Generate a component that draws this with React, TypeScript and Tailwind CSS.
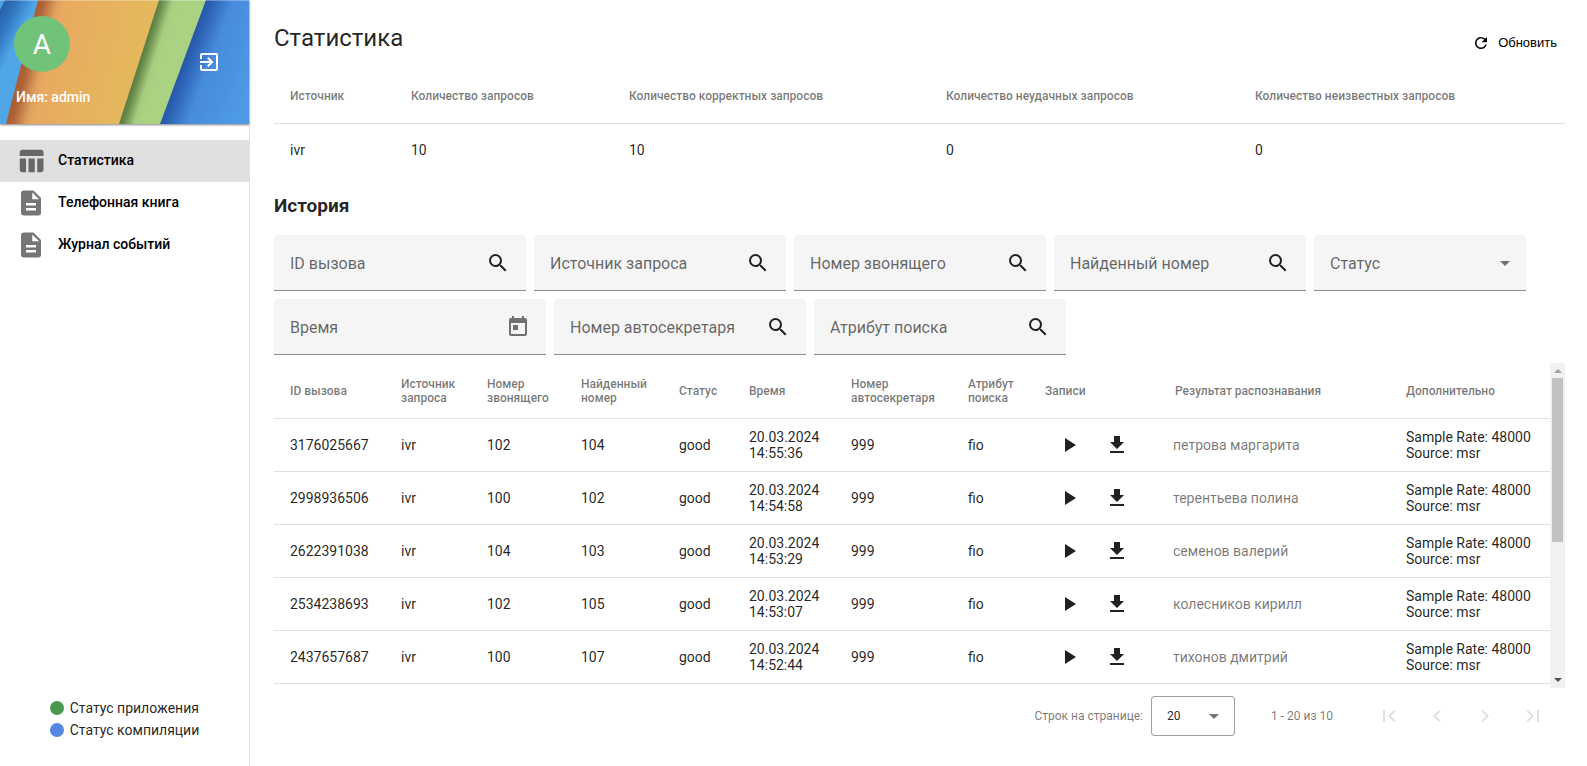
import React, { useState } from 'react';
import {
  MdArrowDropDown,
  MdChevronLeft,
  MdChevronRight,
  MdDescription,
  MdExitToApp,
  MdFileDownload,
  MdFirstPage,
  MdLastPage,
  MdPlayArrow,
  MdRefresh,
  MdSearch,
  MdTableChart,
  MdToday,
} from 'react-icons/md';

const menu = [
  { title: 'Статистика', icon: MdTableChart, active: true },
  { title: 'Телефонная книга', icon: MdDescription, active: false },
  { title: 'Журнал событий', icon: MdDescription, active: false },
];

const records = [
  { id: '3176025667', caller: '102', found: '104', time: '14:55:36', result: 'петрова маргарита' },
  { id: '2998936506', caller: '100', found: '102', time: '14:54:58', result: 'терентьева полина' },
  { id: '2622391038', caller: '104', found: '103', time: '14:53:29', result: 'семенов валерий' },
  { id: '2534238693', caller: '102', found: '105', time: '14:53:07', result: 'колесников кирилл' },
  { id: '2437657687', caller: '100', found: '107', time: '14:52:44', result: 'тихонов дмитрий' },
];

const HeaderArt = () => (
  <svg className="absolute inset-0 w-full h-full" viewBox="0 0 249 124" preserveAspectRatio="none" aria-hidden="true">
    <defs>
      <linearGradient id="sky" gradientUnits="userSpaceOnUse" x1="2" y1="4" x2="28" y2="17">
        <stop offset="0" stopColor="#2560a8" />
        <stop offset="0.4" stopColor="#2f72bd" />
        <stop offset="1" stopColor="#4fa5e6" />
      </linearGradient>
      <linearGradient id="orange" gradientUnits="userSpaceOnUse" x1="22" y1="62" x2="140" y2="92">
        <stop offset="0" stopColor="#a95c31" />
        <stop offset="0.05" stopColor="#b0643a" />
        <stop offset="0.16" stopColor="#e0a05e" />
        <stop offset="0.22" stopColor="#e8aa60" />
        <stop offset="1" stopColor="#e4ba5c" />
      </linearGradient>
      <linearGradient id="green" gradientUnits="userSpaceOnUse" x1="139" y1="62" x2="158" y2="68">
        <stop offset="0" stopColor="#5c7c42" />
        <stop offset="0.2" stopColor="#6a8b4c" />
        <stop offset="0.7" stopColor="#a5cd7e" />
        <stop offset="1" stopColor="#aad282" />
      </linearGradient>
      <linearGradient id="blue" gradientUnits="userSpaceOnUse" x1="183" y1="62" x2="250" y2="87">
        <stop offset="0" stopColor="#2558a6" />
        <stop offset="0.12" stopColor="#2f66b9" />
        <stop offset="0.35" stopColor="#478bdd" />
        <stop offset="1" stopColor="#4e9ae4" />
      </linearGradient>
    </defs>
    <path fill="url(#sky)" d="M0 0h40v124H0z" />
    <path fill="#4ba3e3" d="M0 0h5L0 10z" />
    <path fill="url(#orange)" d="M38 0h122v124H6z" />
    <path fill="url(#green)" d="M159 0h50v124h-90z" />
    <path fill="url(#blue)" d="M206 0h43v124h-89z" />
    <path fill="#ffffff" fillOpacity="0.3" d="M0 0h249v1H0z" />
  </svg>
);

const SearchField = ({ label }: { label: string }) => (
  <div className="flex items-center w-[252px] h-14 pl-4 pr-1 rounded-t bg-[#f5f5f5] border-b border-[#8c8c8c]">
    <input
      type="text"
      aria-label={label}
      placeholder={label}
      className="flex-1 min-w-0 pt-0.5 bg-transparent text-base text-black/87 placeholder-black/60 outline-none"
    />
    <button type="button" aria-label="Поиск" className="flex w-12 h-12 items-center justify-center">
      <MdSearch className="w-6 h-6" />
    </button>
  </div>
);

const Sidebar = () => (
  <aside className="flex flex-col shrink-0 w-[250px] border-r border-black/12">
    <div className="relative h-[124px] shadow-[0_1px_2px_rgba(0,0,0,0.5)]">
      <HeaderArt />
      <div className="relative flex items-start justify-between pl-3.5 pr-7 pt-4">
        <div className="flex w-14 h-14 items-center justify-center pt-0.5 rounded-full bg-[#71c379] text-[28px] text-white">
          A
        </div>
        <button type="button" aria-label="Выход" className="pt-[34px] text-white">
          <MdExitToApp className="w-6 h-6" />
        </button>
      </div>
      <p className="relative pl-4 pt-[13px] text-sm font-medium text-white">Имя: admin</p>
    </div>

    <nav className="pt-4">
      {menu.map(item => (
        <a
          key={item.title}
          href="#"
          className={`flex h-[42px] items-center gap-3 px-4 text-sm font-medium text-black ${item.active ? 'bg-[#e0e0e0]' : ''}`}
        >
          <item.icon className="w-[30px] h-[30px] text-black/54" />
          <span className="pb-0.5">{item.title}</span>
        </a>
      ))}
    </nav>

    <div className="mt-auto mx-auto pb-[25px] text-sm leading-[22px]">
      <p className="flex items-center gap-1.5">
        <span className="w-3.5 h-3.5 rounded-full bg-[#479a50]" />
        Статус приложения
      </p>
      <p className="flex items-center gap-1.5">
        <span className="w-3.5 h-3.5 rounded-full bg-[#5686e3]" />
        Статус компиляции
      </p>
    </div>
  </aside>
);

const Summary = () => (
  <table className="w-full table-fixed text-left text-sm">
    <colgroup>
      <col className="w-[137px]" />
      <col className="w-[218px]" />
      <col className="w-[317px]" />
      <col className="w-[309px]" />
      <col className="w-[310px]" />
    </colgroup>
    <thead>
      <tr className="h-[55px] border-b border-black/12 text-xs text-black/54 *:pt-0.5">
        <th className="pl-4 font-medium">Источник</th>
        <th className="font-medium">Количество запросов</th>
        <th className="font-medium">Количество корректных запросов</th>
        <th className="font-medium">Количество неудачных запросов</th>
        <th className="font-medium">Количество неизвестных запросов</th>
      </tr>
    </thead>
    <tbody>
      <tr className="h-[53px]">
        <td className="pl-4">ivr</td>
        <td>10</td>
        <td>10</td>
        <td>0</td>
        <td>0</td>
      </tr>
    </tbody>
  </table>
);

const History = () => (
  <div className="flex">
    <table className="flex-1 table-fixed mb-1 text-left text-sm leading-4">
      <colgroup>
        <col className="w-[127px]" />
        <col className="w-[86px]" />
        <col className="w-[94px]" />
        <col className="w-[98px]" />
        <col className="w-[70px]" />
        <col className="w-[102px]" />
        <col className="w-[117px]" />
        <col className="w-[77px]" />
        <col className="w-[128px]" />
        <col className="w-[233px]" />
        <col className="w-[144px]" />
      </colgroup>
      <thead>
        <tr className="h-[55px] border-b border-black/12 text-xs leading-[14px] text-black/54 *:pt-0.5">
          <th className="pl-4 font-medium">ID вызова</th>
          <th className="font-medium">Источник<br />запроса</th>
          <th className="font-medium">Номер<br />звонящего</th>
          <th className="font-medium">Найденный<br />номер</th>
          <th className="font-medium">Статус</th>
          <th className="font-medium">Время</th>
          <th className="font-medium">Номер<br />автосекретаря</th>
          <th className="font-medium">Атрибут<br />поиска</th>
          <th className="font-medium">Записи</th>
          <th className="pl-0.5 font-medium">Результат распознавания</th>
          <th className="font-medium">Дополнительно</th>
        </tr>
      </thead>
      <tbody>
        {records.map(row => (
          <tr key={row.id} className="h-[53px] border-b border-black/12">
            <td className="pl-4">{row.id}</td>
            <td>ivr</td>
            <td>{row.caller}</td>
            <td>{row.found}</td>
            <td>good</td>
            <td>20.03.2024<br />{row.time}</td>
            <td>999</td>
            <td>fio</td>
            <td>
              <div className="flex">
                <button type="button" aria-label="Воспроизвести" className="flex w-12 h-12 items-center justify-center">
                  <MdPlayArrow className="w-6 h-6" />
                </button>
                <button type="button" aria-label="Скачать" className="flex w-12 h-12 items-center justify-center">
                  <MdFileDownload className="w-6 h-6" />
                </button>
              </div>
            </td>
            <td className="text-black/54">{row.result}</td>
            <td>Sample Rate: 48000<br />Source: msr</td>
          </tr>
        ))}
      </tbody>
    </table>

    {/* Полоса прокрутки */}
    <div className="flex flex-col items-center shrink-0 w-[15px] bg-[#f1f1f1]">
      <svg className="w-[15px] h-[15px]" viewBox="0 0 15 15" fill="#a3a3a3" aria-hidden="true">
        <path d="M4 10h8L8 6z" />
      </svg>
      <div className="w-[11px] h-[164px] bg-[#c1c1c1]" />
      <svg className="w-[15px] h-[15px] mt-auto" viewBox="0 0 15 15" fill="#505050" aria-hidden="true">
        <path d="M4 5h8L8 9z" />
      </svg>
    </div>
  </div>
);

const pageButtons = [
  { label: 'Первая страница', icon: MdFirstPage },
  { label: 'Предыдущая страница', icon: MdChevronLeft },
  { label: 'Следующая страница', icon: MdChevronRight },
  { label: 'Последняя страница', icon: MdLastPage },
];

const Paginator = () => {
  const [size, setSize] = useState('20');

  return (
    <div className="flex h-14 items-center justify-end pr-2 text-xs text-black/54">
      <label htmlFor="page-size">Строк на странице:</label>
      <div className="relative ml-2 mr-9">
        <select
          id="page-size"
          value={size}
          onChange={(e) => setSize(e.target.value)}
          className="w-[84px] h-10 pl-[15px] appearance-none rounded border border-black/38 bg-white text-black/87"
        >
          <option>20</option>
          <option>50</option>
        </select>
        <MdArrowDropDown className="absolute right-[9px] top-2 w-6 h-6 pointer-events-none" />
      </div>
      <span className="mr-8">1 - 20 из 10</span>
      {pageButtons.map(btn => (
        <button
          key={btn.label}
          type="button"
          disabled
          aria-label={btn.label}
          className="flex w-12 h-12 items-center justify-center text-black/12"
        >
          <btn.icon className="w-6 h-6" />
        </button>
      ))}
    </div>
  );
};

const App = () => {
  const [status, setStatus] = useState('');

  return (
    <div className="flex min-h-screen bg-white text-black/87 font-['Roboto',sans-serif]">
      <Sidebar />

      <main className="flex-1 min-w-0 pl-6 pr-[22px]">
        <header className="flex h-[68px] items-start justify-between pr-2">
          <h1 className="pt-[22px] text-2xl">Статистика</h1>
          <button type="button" className="flex items-center gap-2 pt-[33px] text-[13px] text-black font-['Liberation_Sans',sans-serif]">
            <MdRefresh className="w-[18px] h-[18px]" />
            Обновить
          </button>
        </header>

        <Summary />

        <h2 className="pt-4 pb-4 text-[19px] leading-[27px] font-bold">История</h2>

        {/* Фильтры */}
        <div className="flex flex-wrap gap-2 pb-2">
          <SearchField label="ID вызова" />
          <SearchField label="Источник запроса" />
          <SearchField label="Номер звонящего" />
          <SearchField label="Найденный номер" />
          <div className="relative w-[212px] h-14 rounded-t bg-[#f5f5f5] border-b border-[#8c8c8c]">
            <select
              aria-label="Статус"
              value={status}
              onChange={(e) => setStatus(e.target.value)}
              className="w-full h-full px-4 pt-0.5 appearance-none bg-transparent text-base text-black/60 outline-none"
            >
              <option value="">Статус</option>
              <option value="good">good</option>
            </select>
            <MdArrowDropDown className="absolute right-[9px] top-4 w-6 h-6 text-black/54 pointer-events-none" />
          </div>
          <div className="flex items-center w-[272px] h-14 pl-4 pr-1 rounded-t bg-[#f5f5f5] border-b border-[#8c8c8c]">
            <input
              type="text"
              aria-label="Время"
              placeholder="Время"
              className="flex-1 min-w-0 pt-0.5 bg-transparent text-base placeholder-black/60 outline-none"
            />
            <button type="button" aria-label="Открыть календарь" className="flex w-12 h-12 items-center justify-center text-black/54">
              <MdToday className="w-6 h-6" />
            </button>
          </div>
          <SearchField label="Номер автосекретаря" />
          <SearchField label="Атрибут поиска" />
        </div>

        <History />
        <Paginator />
      </main>
    </div>
  );
};

export default App;
